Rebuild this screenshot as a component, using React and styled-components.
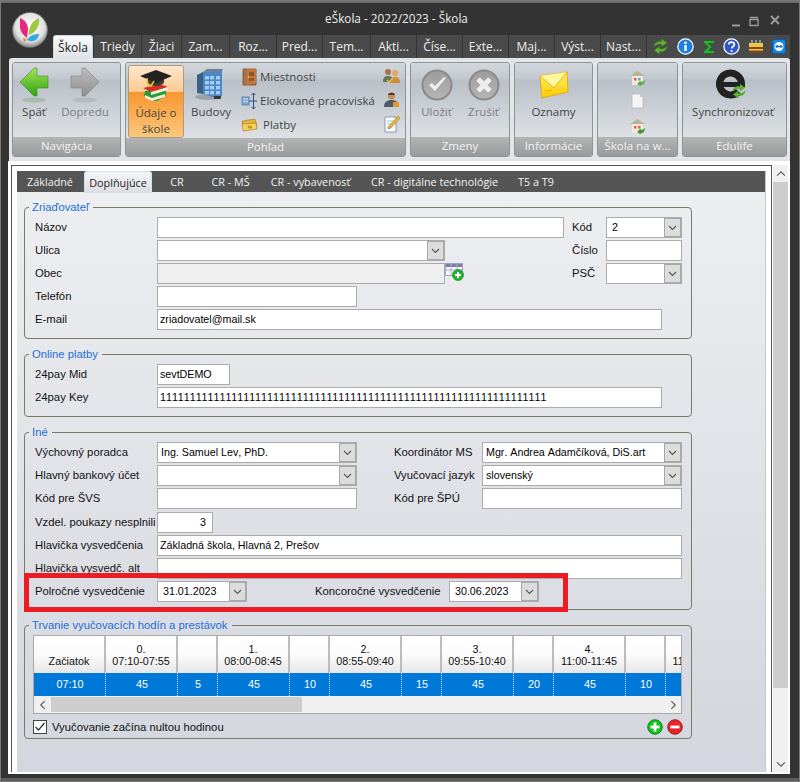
import React from 'react';
import styled, { createGlobalStyle } from 'styled-components';

const GlobalStyle = createGlobalStyle`
  html, body { margin: 0; padding: 0; background: #333; }
  * { box-sizing: border-box; }
`;

const UI_FONT = '"Open Sans", "Liberation Sans", sans-serif';
const FORM_FONT = '"Liberation Sans", Arial, sans-serif';

const Window = styled.div`
  position: relative;
  width: 800px;
  height: 782px;
  overflow: hidden;
  display: flex;
  flex-direction: column;
  background: #333;
  box-shadow: inset 0 0 0 1px #7a7a7a, inset 0 3px 0 #6c6c6c, inset 0 -4px 0 #5c5c5c;
  font-family: ${FORM_FONT};
`;

const TitleBar = styled.div`
  height: 35px;
  flex: none;
  display: flex;
  align-items: center;
  justify-content: center;
  padding: 0 7px 0 0;
  color: #eee;
  font: 11.75px ${UI_FONT};
`;

const WindowButtons = styled.div`
  position: absolute;
  top: 14px;
  right: 12px;
  display: flex;
  gap: 6px;
`;

const LogoSlot = styled.div`
  position: absolute;
  left: 12px;
  top: 12px;
  width: 36px;
  height: 36px;
`;

const MenuBar = styled.div`
  height: 23px;
  flex: none;
  display: flex;
  align-items: stretch;
  padding-left: 53px;
  font: 12px ${UI_FONT};
`;

const MenuTab = styled.div`
  width: ${(p) => p.$w}px;
  flex: none;
  display: flex;
  align-items: center;
  justify-content: center;
  margin-right: 1px;
  color: ${(p) => (p.$active ? '#222' : '#eee')};
  background: ${(p) => (p.$active ? 'linear-gradient(#fafbfc, #dfe3e7)' : '#4a4a4a')};
  border: ${(p) => (p.$active ? '1px solid #c9dbe0' : 'none')};
  border-bottom: none;
  border-radius: ${(p) => (p.$active ? '3px 3px 0 0' : '0')};
`;

const MenuIcons = styled.div`
  flex: 1;
  display: flex;
  align-items: center;
  padding: 0 3px 0 5px;
  justify-content: space-between;
  background: #4a4a4a;
  margin-right: 10px;
`;

const Ribbon = styled.div`
  height: 103px;
  flex: none;
  margin: 0 10px 0 9px;
  padding: 4px 3px 4px 3px;
  display: flex;
  gap: 4px;
  background: #e2e5e8;
  border-radius: 3px 3px 0 0;
`;

const Group = styled.div`
  width: ${(p) => p.$w}px;
  flex: none;
  display: flex;
  flex-direction: column;
  border: 1px solid #8e9396;
  border-radius: 3px;
  overflow: hidden;
`;

const GroupBody = styled.div`
  flex: 1;
  display: flex;
  justify-content: ${(p) => p.$justify || 'flex-start'};
  padding: ${(p) => p.$pad || '0'};
  background: linear-gradient(#d2d7dc 0%, #c4c9d0 20%, #b9bfc7 24%, #c6cbd2 50%, #dde0e4 100%);
  font: 11.5px/16px ${UI_FONT};
  color: #444;
`;

const GroupFooter = styled.div`
  height: 19px;
  flex: none;
  display: flex;
  align-items: center;
  justify-content: center;
  padding-bottom: 2px;
  background: linear-gradient(#b3b5b5, #979a9a);
  color: #f2f2f2;
  font: 11.5px ${UI_FONT};
  white-space: nowrap;
`;

const LargeButton = styled.div`
  width: ${(p) => p.$w}px;
  flex: none;
  display: flex;
  flex-direction: column;
  align-items: center;
  text-align: center;
  padding-top: 3px;
  white-space: nowrap;
  color: ${(p) => (p.$disabled ? '#7b7d82' : '#444')};
`;

const ActiveButton = styled(LargeButton)`
  margin-top: 2px;
  padding-top: 1px;
  height: 73px;
  border: 1px solid #ab9b7c;
  border-radius: 3px;
  background: linear-gradient(#fde6cd 0%, #fbcb93 36%, #f8962e 37%, #fac87e 100%);
`;

const LargeIcon = styled.div`
  height: 38px;
  display: flex;
  align-items: center;
  justify-content: center;
`;

const SmallList = styled.div`
  display: flex;
  flex-direction: column;
  margin-left: 3px;
  padding-top: 2px;
`;

const SmallItem = styled.div`
  height: 24px;
  display: flex;
  align-items: center;
  gap: 2px;
  white-space: nowrap;
`;

const SideIcons = styled.div`
  margin-left: auto;
  padding: 1px 5px 0 0;
  display: flex;
  flex-direction: column;
`;

const CenterIcons = styled(SideIcons)`
  margin: 0;
  padding: 2px 0 0;
`;

const IconCell = styled.div`
  height: 24px;
  display: flex;
  align-items: center;
  justify-content: center;
`;

const Body = styled.div`
  flex: 1;
  display: flex;
  margin: 0 10px 8px 8px;
  padding: 4px 2px 2px 3px;
  gap: 1px;
  background: #fff;
  min-height: 0;
`;

const ContentBox = styled.div`
  width: 761px;
  flex: none;
  display: flex;
  padding: 5px 5px 0;
  border: 1px solid #555;
  border-bottom: none;
`;

const Panel = styled.div`
  flex: 1;
  display: flex;
  flex-direction: column;
  background: linear-gradient(#eeeff1, #d3d6de);
  border-right: 1px solid #c4c7cc;
`;

const TabStrip = styled.div`
  height: 21px;
  flex: none;
  display: flex;
  background: #555;
  font: 10.8px ${UI_FONT};
`;

const PageTab = styled.div`
  width: ${(p) => p.$w}px;
  flex: none;
  height: ${(p) => (p.$active ? '22px' : '21px')};
  margin-left: ${(p) => p.$gap || 0}px;
  display: flex;
  align-items: center;
  justify-content: center;
  white-space: nowrap;
  color: ${(p) => (p.$active ? '#222' : '#f2f2f2')};
  background: ${(p) => (p.$active ? 'linear-gradient(#f3f4f6, #dadde3)' : 'transparent')};
  border: ${(p) => (p.$active ? '1px solid #cbe3ea' : 'none')};
  border-bottom: none;
  border-radius: ${(p) => (p.$active ? '3px 3px 0 0' : '0')};
`;

const PageBody = styled.div`
  padding: 8px 0 0 7px;
`;

const Section = styled.fieldset`
  width: 668px;
  margin: 0 0 8px;
  padding: 3px 9px ${(p) => p.$bottom ?? 6}px 8px;
  border: 1px solid #7b7b63;
  border-radius: 4px;
`;

const Legend = styled.legend`
  margin-left: -4px;
  padding: 0 4px 0 3px;
  height: 14px;
  font-size: 11.3px;
  line-height: 14px;
  color: #1f6fd6;
`;

const Row = styled.div`
  height: 23px;
  display: flex;
  padding-left: 2px;
  margin-top: ${(p) => p.$top || 0}px;
`;

const Label = styled.div`
  width: ${(p) => p.$w || 122}px;
  flex: none;
  font-size: 11.3px;
  line-height: 20px;
  color: #111;
  white-space: nowrap;
`;

const Side = styled.div`
  margin-left: ${(p) => (p.$at ? `${p.$at}px` : 'auto')};
  display: flex;
`;

const Input = styled.div`
  width: ${(p) => p.$w}px;
  height: 21px;
  flex: none;
  padding: 0 2px;
  border: 1px solid #ababab;
  background: ${(p) => (p.$disabled ? '#efefef' : '#fff')};
  font-size: 10.7px;
  font-kerning: none;
  line-height: 19px;
  color: #000;
  text-align: ${(p) => (p.$right ? 'right' : 'left')};
  padding-right: ${(p) => (p.$right ? '6px' : '2px')};
  white-space: nowrap;
  overflow: hidden;
`;

const Combo = styled(Input)`
  position: relative;
  padding-left: ${(p) => p.$indent || 3}px;
`;

const ComboButton = styled.div`
  position: absolute;
  top: 0;
  right: 0;
  width: 17px;
  height: 19px;
  display: flex;
  align-items: center;
  justify-content: center;
  background: #dcdcdc;
  border: 1px solid #a8a8a8;
`;

const DataGrid = styled.div`
  width: 649px;
  height: 79px;
  border: 1px solid #aaa;
  overflow: hidden;
`;

const GridRow = styled.div`
  display: flex;
  height: ${(p) => p.$h}px;
  background: ${(p) => p.$bg || 'transparent'};
`;

const HeadCell = styled.div`
  width: ${(p) => p.$w}px;
  flex: none;
  padding-bottom: 6px;
  display: flex;
  flex-direction: column;
  justify-content: flex-end;
  align-items: center;
  white-space: nowrap;
  font-size: 10.8px;
  line-height: 12px;
  color: #111;
  background: linear-gradient(#fff, #fafafa 55%, #e6e6e6);
  border-right: 2px solid #b9bdbd;
`;

const DataCell = styled.div`
  width: ${(p) => p.$w}px;
  flex: none;
  display: flex;
  align-items: center;
  justify-content: center;
  padding: 0 0 1px 1px;
  font-size: 10.8px;
  color: #fff;
  border-right: 1px dotted #dcecf9;
`;

const HScroll = styled.div`
  height: 17px;
  display: flex;
  align-items: center;
  background: #f0f0f0;
`;

const ScrollArrow = styled.div`
  width: ${(p) => p.$w || 17}px;
  height: 17px;
  flex: none;
  display: flex;
  align-items: center;
  justify-content: center;
`;

const HThumb = styled.div`
  width: 251px;
  height: 15px;
  background: #cdcdcd;
`;

const Spacer = styled.div`
  flex: 1;
`;

const BottomRow = styled.div`
  height: 24px;
  display: flex;
  align-items: center;
  gap: 5px;
  font-size: 11.3px;
  color: #111;
  padding-top: 2px;
`;

const CheckBox = styled.div`
  width: 14px;
  height: 14px;
  display: flex;
  align-items: center;
  justify-content: center;
  background: #fff;
  border: 1px solid #444;
`;

const RoundButtons = styled.div`
  margin-left: auto;
  margin-right: -1px;
  display: flex;
  gap: 4px;
`;

const VScroll = styled.div`
  width: 15px;
  flex: none;
  display: flex;
  flex-direction: column;
  background: #f0f0f0;
`;

const VThumb = styled.div`
  height: 506px;
  background: #cdcdcd;
`;

const Highlight = styled.div`
  position: absolute;
  left: 24px;
  top: 573px;
  width: 544px;
  height: 39px;
  border: 5px solid #ed1c24;
  pointer-events: none;
`;

const Chevron = ({ dir = 'down', color = '#555', size = 9 }) => {
  const paths = {
    down: 'M1 3l3.5 3.5L8 3',
    up: 'M1 6l3.5-3.5L8 6',
    left: 'M6 1L2.5 4.5 6 8',
    right: 'M3 1l3.5 3.5L3 8',
  };
  return (
    <svg width={size} height={size} viewBox="0 0 9 9" fill="none">
      <path d={paths[dir]} stroke={color} strokeWidth="1.1" />
    </svg>
  );
};

const BoldChevron = ({ dir }) => <Chevron dir={dir} color="#606060" size={10} />;

const Logo = () => (
  <svg width="36" height="36" viewBox="0 0 36 36">
    <defs>
      <radialGradient id="lg-silver" cx="0.5" cy="0.42" r="0.58">
        <stop offset="0" stopColor="#ffffff" />
        <stop offset="0.7" stopColor="#e2e2e2" />
        <stop offset="1" stopColor="#838383" />
      </radialGradient>
    </defs>
    <circle cx="18" cy="18" r="17.5" fill="url(#lg-silver)" stroke="#6e6e6e" strokeWidth="0.6" />
    <path d="M8 6c5 2 8 6 8 12l-1 8c-4-3-7-7-7-11z" fill="#e6287f" />
    <path d="M27 6c1 6-2 14-10 17-1-7 3-14 10-17z" fill="#a3c93a" />
    <path d="M27 22c-1 6-6 9-12 6 2-4 7-6 12-6z" fill="#35a9dd" />
    <path d="M11 26c2 0 3 1 4 2l-3 2z" fill="#f28c28" />
  </svg>
);

const Arrow = ({ id, from, to, edge, flip }) => (
  <svg width="30" height="36" viewBox="0 0 30 36">
    <defs>
      <linearGradient id={id} x1="0" y1="0" x2="0" y2="1">
        <stop offset="0" stopColor={from} />
        <stop offset="1" stopColor={to} />
      </linearGradient>
    </defs>
    <ellipse cx="15" cy="33" rx="12" ry="2.5" fill={edge} opacity="0.22" />
    <g transform={flip ? 'translate(30 0) scale(-1 1)' : undefined}>
      <path d="M1 15L15 1h3v8h11v12H18v8h-3z" fill={`url(#${id})`} stroke={edge} strokeWidth="0.6" />
    </g>
  </svg>
);

const Cap = () => (
  <svg width="32" height="34" viewBox="0 0 32 34">
    <path d="M5 22l18-3 3 3v4l-2 2-7 4-3 0-10-5z" fill="#21a038" />
    <path d="M3 19l17-4 8 3-17 5z" fill="#d93025" />
    <path d="M11 23l17-5v3l-17 5z" fill="#f5ead6" />
    <path d="M5 26l7 3 13-4v3l-13 4-7-3z" fill="#f5ead6" />
    <path d="M8 7v7c5 4 11 4 16 0V7z" fill="#3a3a3a" />
    <path d="M0 7L16 1l16 6-16 7z" fill="#222" />
    <path d="M7 9l1 7 3 1 3-5" fill="none" stroke="#e8c020" strokeWidth="1.5" />
  </svg>
);

const Building = () => (
  <svg width="34" height="34" viewBox="0 0 34 34">
    <ellipse cx="14" cy="29" rx="13" ry="3" fill="#555" opacity="0.35" />
    <path d="M9 4l19-2v26l-7 2-12-4z" fill="#4e86c6" />
    <path d="M3 7l6-3v22l-6-1z" fill="#3b5f85" />
    <path d="M9 4l4-3 16 0-1 2z" fill="#6b7f8f" />
    {[8, 13, 18, 23].map((y) => [11, 16, 22].map((x) => <rect key={`${x}-${y}`} x={x} y={y} width="4" height="3.4" fill="#9fd0f5" />))}
    <rect x="20" y="28" width="7" height="3" rx="1" fill="#333" />
  </svg>
);

const Door = () => (
  <svg width="17" height="18" viewBox="0 0 17 18">
    <path d="M2 1h13v16H2z" fill="#a9744a" stroke="#7a4a28" strokeWidth="0.8" />
    <path d="M6 1h9v14l-9 2z" fill="#c1783e" />
    <path d="M8 4h5v4H8zM8 10h5v3H8z" fill="#8e5528" />
    <circle cx="7.5" cy="9" r="0.8" fill="#f3d46a" />
  </svg>
);

const Branches = () => (
  <svg width="17" height="18" viewBox="0 0 17 18">
    <rect x="1" y="5" width="7" height="8" fill="#7fa9d9" stroke="#4a6f9f" strokeWidth="0.7" />
    <path d="M2.5 7h1.5M5 7h1.5M2.5 9.5h1.5M5 9.5h1.5" stroke="#fff" strokeWidth="1" />
    <path d="M12.5 1v16M8 9h8M12.5 1l-2 2M12.5 1l2 2M12.5 17l-2-2M12.5 17l2-2" fill="none" stroke="#2b4f86" strokeWidth="1" />
  </svg>
);

const Money = () => (
  <svg width="17" height="14" viewBox="0 0 17 14">
    <path d="M1 3l13-2 2 7-13 3z" fill="#e8b23a" stroke="#a87b18" strokeWidth="0.6" />
    <path d="M1 6l14-1 1 6-14 2z" fill="#f4cf5e" stroke="#a87b18" strokeWidth="0.6" />
    <ellipse cx="9" cy="9" rx="2.4" ry="1.6" fill="#c8931f" />
  </svg>
);

const People = () => (
  <svg width="17" height="18" viewBox="0 0 17 18">
    <circle cx="5" cy="5" r="3" fill="#a9714c" />
    <path d="M0 15c0-5 2-6 5-6s5 1 5 6z" fill="#5e7a5a" />
    <circle cx="12" cy="6" r="3" fill="#e0a860" />
    <path d="M7 16c0-5 2-6 5-6s5 1 5 6z" fill="#d18c38" />
    <path d="M4 13l2 2 4-4" fill="none" stroke="#d7c83a" strokeWidth="1.4" />
  </svg>
);

const Person = () => (
  <svg width="17" height="18" viewBox="0 0 17 18">
    <circle cx="8.5" cy="5" r="3.6" fill="#c88e55" />
    <path d="M5 4c0-3 7-3 7 0z" fill="#533" />
    <path d="M1 16c0-5 3-7 7.500-7S16 11 16 16z" fill="#4d5a6b" />
    <path d="M10 11h6v5h-6z" fill="#e59a2d" />
  </svg>
);

const Note = () => (
  <svg width="17" height="18" viewBox="0 0 17 18">
    <path d="M2 2h11v15H2z" fill="#fdfdfd" stroke="#6d86a8" strokeWidth="0.8" />
    <path d="M4 6h7M4 9h5M4 12h4" stroke="#9db1c9" strokeWidth="0.8" />
    <path d="M15 1l2 2-9 10-3 1 1-3z" fill="#e9b83e" stroke="#8a6a18" strokeWidth="0.5" />
  </svg>
);

const GrayRound = ({ id, children }) => (
  <svg width="32" height="32" viewBox="0 0 32 32">
    <defs>
      <linearGradient id={id} x1="0" y1="0" x2="0" y2="1">
        <stop offset="0" stopColor="#9c9c9c" />
        <stop offset="1" stopColor="#b5b5b5" />
      </linearGradient>
    </defs>
    <circle cx="16" cy="16" r="14.5" fill={`url(#${id})`} stroke="#8a8a8a" strokeWidth="2" />
    {children}
  </svg>
);

const Envelope = () => (
  <svg width="30" height="30" viewBox="0 0 30 30">
    <defs>
      <linearGradient id="env" x1="0" y1="0" x2="0" y2="1">
        <stop offset="0" stopColor="#fff36a" />
        <stop offset="1" stopColor="#ffc800" />
      </linearGradient>
    </defs>
    <path d="M1 6l27-4 1 20-26 6z" fill="url(#env)" stroke="#d9a400" strokeWidth="0.8" />
    <path d="M1 6l14 12L28 2" fill="#fff7a0" stroke="#d9a400" strokeWidth="0.8" />
    <path d="M6 21l7-1" stroke="#e3b000" strokeWidth="1" />
  </svg>
);

const House = ({ id, accent }) => (
  <svg width="17" height="17" viewBox="0 0 17 17">
    <path d="M1 7l7.500-5L16 7z" fill="#b9b39a" />
    <rect x="3" y="7" width="11" height="9" fill="#efe9d6" />
    <rect x="5" y="9" width="2.500" height="2.500" fill="#d8616b" />
    <rect x="9" y="9" width="2.500" height="2.500" fill={id === 'a' ? '#6aa5d8' : '#d8616b'} />
    <path d="M8 15l3-3 2 1 3-2-1 4-4 2z" fill={accent} />
  </svg>
);

const Page = () => (
  <svg width="13" height="16" viewBox="0 0 13 16">
    <path d="M1 1h8l3 3v11H1z" fill="#f5f5f5" stroke="#b6b6b6" strokeWidth="0.8" />
    <path d="M9 1v3h3z" fill="#c7c7c7" />
  </svg>
);

const Refresh = ({ size = 16 }) => (
  <svg width={size} height={size} viewBox="0 0 16 16">
    <path d="M2 8c0-3 3-5.500 7-4.500V1l5 3.500-5 3.500V5.800C6 5.200 4 6 2 8z" fill="#5db52e" stroke="#3c8a1c" strokeWidth="0.4" />
    <path d="M14 8c0 3-3 5.500-7 4.500V15l-5-3.500L7 8v2.200c3 .6 5-.2 7-2.200z" fill="#5db52e" stroke="#3c8a1c" strokeWidth="0.4" />
  </svg>
);

const Edu = () => (
  <svg width="34" height="32" viewBox="0 0 34 32">
    <path d="M22.500 22.500A11 11 0 1 1 25.500 15" fill="none" stroke="#222" strokeWidth="7" />
    <rect x="5" y="13" width="24" height="5" fill="#222" />
    <g transform="translate(15 14)">
      <Refresh />
    </g>
  </svg>
);

const TableAdd = () => (
  <svg width="20" height="18" viewBox="0 0 20 18">
    <rect x="0.500" y="0.500" width="17" height="12" fill="#f6f7fb" stroke="#9ba3c2" />
    <rect x="1" y="1" width="16" height="3" fill="#7f7aa6" />
    <path d="M6 1v12M12 1v12M1 7h16" stroke="#a9b0cc" />
    <circle cx="13" cy="12" r="5.500" fill="#1fb52c" stroke="#0f7d19" strokeWidth="0.6" />
    <path d="M13 9v6M10 12h6" stroke="#fff" strokeWidth="2" />
  </svg>
);

const RoundSign = ({ bg, edge, plus }) => (
  <svg width="16" height="16" viewBox="0 0 16 16">
    <circle cx="8" cy="8" r="7.300" fill={bg} stroke={edge} strokeWidth="0.9" />
    <path d="M3.500 8h9" stroke="#fff" strokeWidth="2.800" />
    {plus && <path d="M8 3.500v9" stroke="#fff" strokeWidth="2.800" />}
  </svg>
);

const InfoIcon = () => (
  <svg width="17" height="17" viewBox="0 0 17 17">
    <circle cx="8.500" cy="8.500" r="7.700" fill="#1d7fe0" stroke="#fff" strokeWidth="1.200" />
    <rect x="7.300" y="7" width="2.400" height="6" fill="#fff" />
    <circle cx="8.500" cy="4.800" r="1.400" fill="#fff" />
  </svg>
);

const SigmaIcon = () => (
  <svg width="14" height="14" viewBox="0 0 14 14">
    <path d="M12 3V1H2v1.500L7 7l-5 4.500V13h10v-2H6l3.500-4L5.500 3z" fill="#13c21f" />
  </svg>
);

const HelpIcon = () => (
  <svg width="17" height="17" viewBox="0 0 17 17">
    <circle cx="8.500" cy="8.500" r="7.600" fill="#2f55c9" stroke="#fff" strokeWidth="1.300" />
    <path d="M5.800 6.500c0-3.300 5.600-3.300 5.600 0 0 2-2.700 2-2.800 4" fill="none" stroke="#fff" strokeWidth="1.700" />
    <circle cx="8.600" cy="13" r="1.100" fill="#fff" />
  </svg>
);

const CakeIcon = () => (
  <svg width="16" height="15" viewBox="0 0 16 15">
    <path d="M4 1v4M8 1v4M12 1v4" stroke="#8fd0e8" strokeWidth="1.200" />
    <rect x="1" y="4" width="14" height="5" fill="#f4c542" />
    <rect x="1" y="8" width="14" height="6" fill="#7a4a1e" />
    <rect x="1" y="10" width="14" height="1.500" fill="#f4c542" />
  </svg>
);

const RemoteIcon = () => (
  <svg width="15" height="16" viewBox="0 0 15 16">
    <rect x="0.500" y="0.500" width="13" height="14" rx="2" fill="#1186e2" stroke="#0e5aa8" />
    <circle cx="7" cy="7.500" r="4.500" fill="#fff" />
    <path d="M3 7.500l2.500-2v1.300h3V5.500l2.500 2-2.500 2V8.200h-3v1.300z" fill="#0e6fc5" />
  </svg>
);

const MENU = [
  ['Triedy', 47], ['Žiaci', 39], ['Zam...', 47], ['Roz...', 46], ['Pred...', 45],
  ['Tem...', 47], ['Akti...', 45], ['Číse...', 45], ['Exte...', 45], ['Maj...', 45], ['Výst...', 45], ['Nast...', 45],
];

const COLS = [
  { w: 72, head: ['Začiatok'], value: '07:10' },
  { w: 72, head: ['0.', '07:10-07:55'], value: '45' },
  { w: 40, head: [], value: '5' },
  { w: 72, head: ['1.', '08:00-08:45'], value: '45' },
  { w: 40, head: [], value: '10' },
  { w: 72, head: ['2.', '08:55-09:40'], value: '45' },
  { w: 40, head: [], value: '15' },
  { w: 72, head: ['3.', '09:55-10:40'], value: '45' },
  { w: 40, head: [], value: '20' },
  { w: 72, head: ['4.', '11:00-11:45'], value: '45' },
  { w: 40, head: [], value: '10' },
  { w: 72, head: ['5.', '11:55-12:40'], value: '45' },
];

const ComboBox = ({ w, value, indent }) => (
  <Combo $w={w} $indent={indent}>
    {value}
    <ComboButton>
      <Chevron />
    </ComboButton>
  </Combo>
);

const App = () => (
  <>
    <GlobalStyle />
    <Window>
      <TitleBar>eŠkola - 2022/2023 - Škola</TitleBar>
      <WindowButtons>
        <svg width="56" height="14" viewBox="0 0 56 14" fill="none" stroke="#9a9a9a">
          <path d="M0 11.500h8" strokeWidth="2" />
          <path d="M18 3.500h8M18 5.500h8v6h-8z" strokeWidth="1.400" />
          <path d="M39 2l8 8M47 2l-8 8" strokeWidth="2" />
        </svg>
      </WindowButtons>
      <MenuBar>
        <MenuTab $active $w={40}>Škola</MenuTab>
        {MENU.map(([name, w]) => (
          <MenuTab key={name} $w={w}>{name}</MenuTab>
        ))}
        <MenuIcons>
          <Refresh size={17} />
          <InfoIcon />
          <SigmaIcon />
          <HelpIcon />
          <CakeIcon />
          <RemoteIcon />
        </MenuIcons>
      </MenuBar>
      <Ribbon>
        <Group $w={109}>
          <GroupBody>
            <LargeButton $w={42}>
              <LargeIcon><Arrow id="ar1" from="#a6e05c" to="#2ea40f" edge="#3b8f1c" /></LargeIcon>
              Späť
            </LargeButton>
            <LargeButton $w={60} $disabled>
              <LargeIcon><Arrow id="ar2" from="#bdbdbd" to="#8f8f8f" edge="#808080" flip /></LargeIcon>
              Dopredu
            </LargeButton>
          </GroupBody>
          <GroupFooter>Navigácia</GroupFooter>
        </Group>
        <Group $w={281}>
          <GroupBody $pad="0 0 0 2px">
            <ActiveButton $w={56}>
              <LargeIcon><Cap /></LargeIcon>
              Údaje o<br />škole
            </ActiveButton>
            <LargeButton $w={54}>
              <LargeIcon><Building /></LargeIcon>
              Budovy
            </LargeButton>
            <SmallList>
              <SmallItem><Door />Miestnosti</SmallItem>
              <SmallItem><Branches />Elokované pracoviská</SmallItem>
              <SmallItem><Money />&nbsp;Platby</SmallItem>
            </SmallList>
            <SideIcons>
              <IconCell><People /></IconCell>
              <IconCell><Person /></IconCell>
              <IconCell><Note /></IconCell>
            </SideIcons>
          </GroupBody>
          <GroupFooter>Pohľad</GroupFooter>
        </Group>
        <Group $w={100}>
          <GroupBody $justify="center">
            <LargeButton $w={47} $disabled>
              <LargeIcon>
                <GrayRound id="gr1">
                  <path d="M8 16l6 6 11-13-2-1-9 9-3-3z" fill="#eee" />
                </GrayRound>
              </LargeIcon>
              Uložiť
            </LargeButton>
            <LargeButton $w={47} $disabled>
              <LargeIcon>
                <GrayRound id="gr2">
                  <path d="M10 10l12 12M22 10L10 22" stroke="#eee" strokeWidth="5" />
                </GrayRound>
              </LargeIcon>
              Zrušiť
            </LargeButton>
          </GroupBody>
          <GroupFooter>Zmeny</GroupFooter>
        </Group>
        <Group $w={79}>
          <GroupBody $justify="center">
            <LargeButton $w={70}>
              <LargeIcon><Envelope /></LargeIcon>
              Oznamy
            </LargeButton>
          </GroupBody>
          <GroupFooter>Informácie</GroupFooter>
        </Group>
        <Group $w={81}>
          <GroupBody $justify="center">
            <CenterIcons>
              <IconCell><House id="a" accent="#58b048" /></IconCell>
              <IconCell><Page /></IconCell>
              <IconCell><House id="b" accent="#3f9a2c" /></IconCell>
            </CenterIcons>
          </GroupBody>
          <GroupFooter>Škola na w...</GroupFooter>
        </Group>
        <Group $w={105}>
          <GroupBody $justify="center" $pad="0 3px 0 0">
            <LargeButton $w={100}>
              <LargeIcon><Edu /></LargeIcon>
              Synchronizovať
            </LargeButton>
          </GroupBody>
          <GroupFooter>Edulife</GroupFooter>
        </Group>
      </Ribbon>
      <Body>
        <ContentBox>
          <Panel>
            <TabStrip>
              <PageTab $w={66}>Základné</PageTab>
              <PageTab $active $gap={1} $w={68}>Doplňujúce</PageTab>
              <PageTab $w={50}>CR</PageTab>
              <PageTab $w={57}>CR - MŠ</PageTab>
              <PageTab $w={103}>CR - vybavenosť</PageTab>
              <PageTab $w={145}>CR - digitálne technológie</PageTab>
              <PageTab $w={58}>T5 a T9</PageTab>
            </TabStrip>
            <PageBody>
              <Section>
                <Legend>Zriaďovateľ</Legend>
                <Row>
                  <Label>Názov</Label>
                  <Input $w={407} />
                  <Side>
                    <Label $w={34}>Kód</Label>
                    <ComboBox w={76} value="2" indent={5} />
                  </Side>
                </Row>
                <Row>
                  <Label>Ulica</Label>
                  <ComboBox w={288} />
                  <Side>
                    <Label $w={34}>Číslo</Label>
                    <Input $w={76} />
                  </Side>
                </Row>
                <Row>
                  <Label>Obec</Label>
                  <Input $w={288} $disabled />
                  <TableAdd />
                  <Side>
                    <Label $w={34}>PSČ</Label>
                    <ComboBox w={76} />
                  </Side>
                </Row>
                <Row>
                  <Label>Telefón</Label>
                  <Input $w={200} />
                </Row>
                <Row>
                  <Label>E-mail</Label>
                  <Input $w={505}>zriadovatel@mail.sk</Input>
                </Row>
              </Section>
              <Section>
                <Legend>Online platby</Legend>
                <Row>
                  <Label>24pay Mid</Label>
                  <Input $w={73}>sevtDEMO</Input>
                </Row>
                <Row>
                  <Label>24pay Key</Label>
                  <Input $w={505}>{'1'.repeat(65)}</Input>
                </Row>
              </Section>
              <Section $bottom={5}>
                <Legend>Iné</Legend>
                <Row>
                  <Label>Výchovný poradca</Label>
                  <ComboBox w={200} value="Ing. Samuel Lev, PhD." />
                  <Side>
                    <Label $w={88}>Koordinátor MS</Label>
                    <ComboBox w={200} value="Mgr. Andrea Adamčíková, DiS.art" />
                  </Side>
                </Row>
                <Row>
                  <Label>Hlavný bankový účet</Label>
                  <ComboBox w={200} />
                  <Side>
                    <Label $w={88}>Vyučovací jazyk</Label>
                    <ComboBox w={200} value="slovenský" />
                  </Side>
                </Row>
                <Row>
                  <Label>Kód pre ŠVS</Label>
                  <Input $w={200} />
                  <Side>
                    <Label $w={88}>Kód pre ŠPÚ</Label>
                    <Input $w={200} />
                  </Side>
                </Row>
                <Row $top={1}>
                  <Label>Vzdel. poukazy nesplnili</Label>
                  <Input $w={56} $right>3</Input>
                </Row>
                <Row>
                  <Label>Hlavička vysvedčenia</Label>
                  <Input $w={525}>Základná škola, Hlavná 2, Prešov</Input>
                </Row>
                <Row>
                  <Label>Hlavička vysvedč. alt</Label>
                  <Input $w={525} />
                </Row>
                <Row>
                  <Label>Polročné vysvedčenie</Label>
                  <ComboBox w={90} value="31.01.2023" indent={5} />
                  <Side $at={68}>
                    <Label $w={134}>Koncoročné vysvedčenie</Label>
                    <ComboBox w={90} value="30.06.2023" indent={5} />
                  </Side>
                </Row>
              </Section>
              <Section $bottom={0}>
                <Legend>Trvanie vyučovacích hodín a prestávok</Legend>
                <DataGrid>
                  <GridRow $h={37}>
                    {COLS.map((col, i) => (
                      <HeadCell key={i} $w={col.w}>
                        {col.head.map((line) => (
                          <div key={line}>{line}</div>
                        ))}
                      </HeadCell>
                    ))}
                  </GridRow>
                  <GridRow $h={23} $bg="#0078d7">
                    {COLS.map((col, i) => (
                      <DataCell key={i} $w={col.w}>{col.value}</DataCell>
                    ))}
                  </GridRow>
                  <HScroll>
                    <ScrollArrow><BoldChevron dir="left" /></ScrollArrow>
                    <HThumb />
                    <Spacer />
                    <ScrollArrow><BoldChevron dir="right" /></ScrollArrow>
                  </HScroll>
                </DataGrid>
                <BottomRow>
                  <CheckBox>
                    <svg width="12" height="12" viewBox="0 0 12 12" fill="none">
                      <path d="M1.500 6l3 3 6-7" stroke="#333" strokeWidth="1.300" />
                    </svg>
                  </CheckBox>
                  Vyučovanie začína nultou hodinou
                  <RoundButtons>
                    <RoundSign bg="#12c21e" edge="#0c7d15" plus />
                    <RoundSign bg="#e5272d" edge="#9a1418" />
                  </RoundButtons>
                </BottomRow>
              </Section>
            </PageBody>
          </Panel>
        </ContentBox>
        <VScroll>
          <ScrollArrow $w={15}><BoldChevron dir="up" /></ScrollArrow>
          <VThumb />
          <Spacer />
          <ScrollArrow $w={15}><BoldChevron dir="down" /></ScrollArrow>
        </VScroll>
      </Body>
      <LogoSlot><Logo /></LogoSlot>
      <Highlight />
    </Window>
  </>
);

export default App;
